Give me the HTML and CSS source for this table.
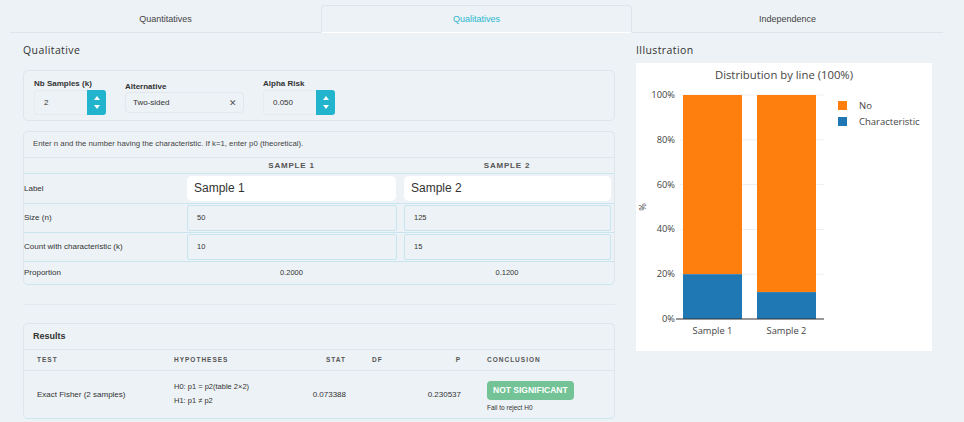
FILE: index.html
```html
<!DOCTYPE html>
<html>
<head>
<meta charset="utf-8">
<link rel="stylesheet" href="styles.css">
</head>
<body>
<div class="tabs">
  <div class="tab">Quantitatives</div>
  <div class="tab active">Qualitatives</div>
  <div class="tab">Independence</div>
</div>
<div class="main">
  <div class="left">
    <h2 class="heading">Qualitative</h2>
    <div class="card params">
      <div class="field">
        <div class="flabel">Nb Samples (k)</div>
        <div class="spin">
          <div class="spin-val">2</div>
          <div class="spin-btn"><span class="up"></span><span class="down"></span></div>
        </div>
      </div>
      <div class="field alt">
        <div class="flabel">Alternative</div>
        <div class="select"><span>Two-sided</span><span class="x">✕</span></div>
      </div>
      <div class="field">
        <div class="flabel">Alpha Risk</div>
        <div class="spin">
          <div class="spin-val">0.050</div>
          <div class="spin-btn"><span class="up"></span><span class="down"></span></div>
        </div>
      </div>
    </div>

    <div class="card data">
      <div class="hint">Enter n and the number having the characteristic. If k=1, enter p0 (theoretical).</div>
      <table class="dtable">
        <colgroup><col class="c0"><col class="c1"><col class="c2"></colgroup>
        <tr class="head"><th></th><th>SAMPLE 1</th><th>SAMPLE 2</th></tr>
        <tr class="r-label"><td>Label</td><td><div class="lbl-in">Sample 1</div></td><td><div class="lbl-in">Sample 2</div></td></tr>
        <tr class="r-num"><td>Size (n)</td><td><div class="num-in">50</div></td><td><div class="num-in">125</div></td></tr>
        <tr class="r-num"><td>Count with characteristic (k)</td><td><div class="num-in">10</div></td><td><div class="num-in">15</div></td></tr>
        <tr class="r-prop"><td>Proportion</td><td class="ctr">0.2000</td><td class="ctr">0.1200</td></tr>
      </table>
    </div>

    <div class="sep"></div>

    <div class="card results">
      <div class="res-title">Results</div>
      <table class="rtable">
        <colgroup><col class="k1"><col class="k2"><col class="k3"><col class="k4"><col class="k5"><col class="k6"></colgroup>
        <tr class="rhead"><th>TEST</th><th>HYPOTHESES</th><th class="rt">STAT</th><th>DF</th><th class="rt">P</th><th>CONCLUSION</th></tr>
        <tr class="rrow">
          <td>Exact Fisher (2 samples)</td>
          <td><div>H0: p1 = p2(table 2×2)</div><div class="h1">H1: p1 ≠ p2</div></td>
          <td class="rt">0.073388</td>
          <td></td>
          <td class="rt">0.230537</td>
          <td><span class="badge">NOT SIGNIFICANT</span><div class="concl">Fail to reject H0</div></td>
        </tr>
      </table>
    </div>
  </div>

  <div class="right">
    <h2 class="heading">Illustration</h2>
    <div class="chart">
      <svg width="296" height="288" viewBox="0 0 296 288" xmlns="http://www.w3.org/2000/svg">
        <text x="148" y="16" text-anchor="middle" class="ct">Distribution by line (100%)</text>
        <g stroke="#eeeeee" stroke-width="1">
          <line x1="44" x2="188" y1="32" y2="32"/>
          <line x1="44" x2="188" y1="76.8" y2="76.8"/>
          <line x1="44" x2="188" y1="121.6" y2="121.6"/>
          <line x1="44" x2="188" y1="166.4" y2="166.4"/>
          <line x1="44" x2="188" y1="211.2" y2="211.2"/>
        </g>
        <rect x="47" y="32" width="59" height="179.2" fill="#ff7f0e"/>
        <rect x="47" y="211.2" width="59" height="44.8" fill="#1f77b4"/>
        <rect x="121" y="32" width="59" height="197.1" fill="#ff7f0e"/>
        <rect x="121" y="229.1" width="59" height="26.9" fill="#1f77b4"/>
        <line x1="106.5" x2="106.5" y1="32" y2="256" stroke="#ffffff" stroke-opacity="0.6"/>
        <line x1="180.5" x2="180.5" y1="32" y2="256" stroke="#ffffff" stroke-opacity="0.6"/>
        <line x1="40" x2="188" y1="256" y2="256" stroke="#333" stroke-width="1.2"/>
        <g class="tick" text-anchor="end">
          <text x="39" y="35">100%</text>
          <text x="39" y="80">80%</text>
          <text x="39" y="125">60%</text>
          <text x="39" y="169">40%</text>
          <text x="39" y="214">20%</text>
          <text x="39" y="259">0%</text>
        </g>
        <g class="tick" text-anchor="middle">
          <text x="76.5" y="271">Sample 1</text>
          <text x="150.5" y="271">Sample 2</text>
        </g>
        <text class="tick" x="0" y="0" transform="translate(10,144) rotate(-90)" text-anchor="middle">%</text>
        <rect x="202" y="38" width="9" height="9" fill="#ff7f0e"/>
        <rect x="202" y="54" width="9" height="9" fill="#1f77b4"/>
        <text class="leg" x="223" y="46">No</text>
        <text class="leg" x="223" y="62">Characteristic</text>
      </svg>
    </div>
  </div>
</div>
</body>
</html>
```

FILE: styles.css
```css
* { box-sizing: border-box; }
html, body { margin: 0; padding: 0; }
body {
  background: #edf2f6;
  font-family: "Liberation Sans", Arial, sans-serif;
  color: #333;
  width: 964px;
  height: 422px;
  overflow: hidden;
}
.tabs {
  display: flex;
  margin: 5px 0 0 10px;
  width: 933px;
  border-bottom: 1px solid #dde4ea;
}
.tab {
  flex: 1;
  height: 27px;
  display: flex;
  align-items: center;
  justify-content: center;
  font-size: 9px;
  color: #444;
  border: 1px solid transparent;
  border-bottom: none;
}
.tab.active {
  color: #2cb6d0;
  border-color: #dde4ea;
  border-radius: 4px 4px 0 0;
  margin-bottom: -1px;
  height: 28px;
  border-bottom: 1px solid #ffffff;
  background: #edf2f6;
}
.main {
  display: flex;
  gap: 21px;
  padding: 0 0 0 23px;
}
.left { width: 592px; }
.right { width: 296px; }
.heading {
  font-family: "Open Sans", sans-serif;
  font-weight: 400;
  font-size: 10.5px;
  letter-spacing: 0.4px;
  color: #333;
  margin: 9px 0 0 0;
  height: 17px;
  line-height: 17px;
}
.card {
  border: 1px solid #dfe5eb;
  border-radius: 5px;
}
.params {
  margin-top: 11px;
  height: 51px;
  display: flex;
  padding: 0 0 0 10px;
  gap: 19px;
}
.field { padding-top: 7px; }
.field.alt { padding-top: 10px; }
.flabel {
  font-size: 8px;
  font-weight: 700;
  color: #333;
  height: 11px;
  line-height: 11px;
}
.alt .flabel { margin-bottom: 0; height: 10px; }
.spin {
  display: flex;
  margin-top: 1px;
  height: 25px;
}
.spin-val {
  width: 53px;
  border: 1px solid #e6ebf0;
  border-right: none;
  border-radius: 3px 0 0 3px;
  font-size: 8px;
  padding-left: 9px;
  line-height: 23px;
  color: #333;
}
.spin-btn {
  width: 19px;
  background: #22b4cc;
  border-radius: 0 3px 3px 0;
  display: flex;
  flex-direction: column;
  align-items: center;
  justify-content: center;
  gap: 5px;
}
.up, .down {
  width: 0; height: 0;
  border-left: 3px solid transparent;
  border-right: 3px solid transparent;
}
.up { border-bottom: 4px solid #fff; }
.down { border-top: 4px solid #fff; }
.select {
  margin-top: 1px;
  width: 119px;
  height: 21px;
  border: 1px solid #e1e7ec;
  border-radius: 4px;
  display: flex;
  align-items: center;
  justify-content: space-between;
  padding: 0 6px 0 7px;
  font-size: 8px;
  color: #333;
}
.select .x { font-size: 9px; color: #555; }
.data {
  margin-top: 10px;
  border-bottom-color: #c8e6ef;
}
.hint {
  font-size: 7.8px;
  color: #444;
  height: 26px;
  line-height: 24px;
  padding-left: 9px;
  border-bottom: 1px solid #dde6ec;
}
.dtable {
  width: 100%;
  border-collapse: collapse;
  table-layout: fixed;
  font-size: 8px;
  color: #333;
}
.c0 { width: 159px; }
.c1 { width: 217px; }
.dtable td, .dtable th { padding: 0; }
.dtable tr { border-bottom: 1px solid #c9e6f0; }
.dtable tr:last-child { border-bottom: none; }
.head th {
  height: 15px;
  font-size: 8px;
  font-weight: 700;
  letter-spacing: 0.8px;
  color: #555;
  text-align: center;
}
.r-label td { height: 30px; }
.r-num td { height: 29px; }
.r-prop td { height: 23px; }
.ctr { text-align: center; font-size: 7.5px; }
.lbl-in {
  margin: 0 4px 0 4px;
  height: 25px;
  background: #fff;
  border-radius: 5px;
  font-size: 12px;
  line-height: 25px;
  padding-left: 7px;
  color: #333;
}
.r-label td:nth-child(3) .lbl-in { margin: 0 3px 0 4px; }
.num-in {
  margin: 0 3px 0 4px;
  height: 26px;
  border: 1px solid #c6e5ef;
  border-radius: 2px;
  font-size: 7.5px;
  line-height: 24px;
  padding-left: 9px;
  color: #333;
}
.sep {
  margin-top: 19px;
  border-top: 1px solid #e2e8ee;
}
.results {
  margin-top: 18px;
  border-bottom-color: #c8e6ef;
}
.res-title {
  font-size: 9px;
  font-weight: 700;
  color: #333;
  height: 26px;
  line-height: 25px;
  padding-left: 9px;
  border-bottom: 1px solid #dde6ec;
}
.rtable {
  width: 100%;
  border-collapse: collapse;
  table-layout: fixed;
  font-size: 8px;
  color: #333;
}
.k1 { width: 137px; }
.k2 { width: 113px; }
.k3 { width: 85px; }
.k4 { width: 42px; }
.k5 { width: 73px; }
.rtable th, .rtable td { padding: 0 0 0 13px; text-align: left; }
.rtable .rt { text-align: right; padding: 0 13px 0 0; }
.rhead th {
  height: 20px;
  font-size: 6.5px;
  font-weight: 700;
  letter-spacing: 1px;
  color: #555;
  border-bottom: 1px solid #dde6ec;
}
.rrow td { height: 48px; vertical-align: middle; }
.rrow td:nth-child(2) { line-height: 14px; font-size: 7.5px; }
.badge {
  display: inline-block;
  background: #74c396;
  color: #fff;
  font-weight: 700;
  font-size: 8.5px;
  padding: 0 6px;
  height: 19px;
  line-height: 19px;
  border-radius: 4px;
  margin-top: 3px;
}
.concl { font-size: 6.5px; margin-top: 4px; color: #333; }
.chart {
  margin-top: 4px;
  width: 296px;
  height: 288px;
  background: #fff;
}
.chart svg { display: block; }
.ct { font-family: "Open Sans", sans-serif; font-size: 11.3px; fill: #444; }
.tick { font-family: "Open Sans", sans-serif; font-size: 9.3px; fill: #444; }
.leg { font-family: "Open Sans", sans-serif; font-size: 9.5px; fill: #444; }
```
